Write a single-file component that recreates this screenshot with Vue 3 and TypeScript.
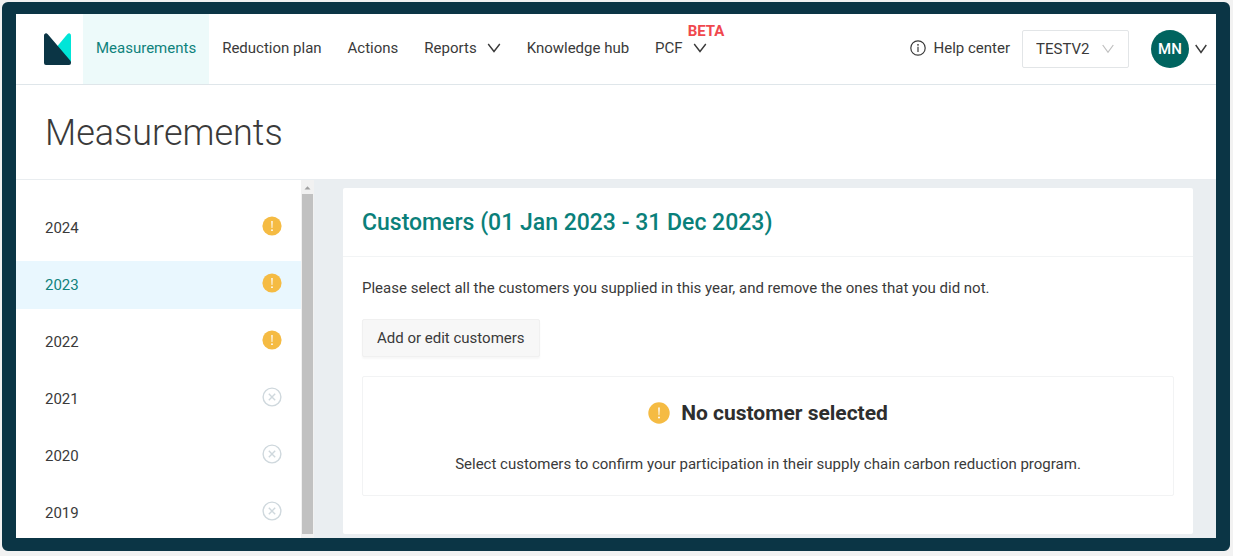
<script setup lang="ts">
import { ref } from 'vue'

interface NavItem {
  label: string
  menu?: boolean
  badge?: string
}

interface YearItem {
  year: number
  status: 'warning' | 'closed'
}

const navItems: NavItem[] = [
  { label: 'Measurements' },
  { label: 'Reduction plan' },
  { label: 'Actions' },
  { label: 'Reports', menu: true },
  { label: 'Knowledge hub' },
  { label: 'PCF', menu: true, badge: 'BETA' },
]

const years: YearItem[] = [
  { year: 2024, status: 'warning' },
  { year: 2023, status: 'warning' },
  { year: 2022, status: 'warning' },
  { year: 2021, status: 'closed' },
  { year: 2020, status: 'closed' },
  { year: 2019, status: 'closed' },
]

const activeNav = ref('Measurements')
const activeYear = ref(2023)
const workspace = ref('TESTV2')
</script>

<template>
  <div class="frame">
    <header class="topbar">
      <a href="#" class="logo" aria-label="Home">
        <svg width="27" height="32" viewBox="0 0 27 32" aria-hidden="true">
          <path d="M13.5 13 23.3 1.3Q24.5 0 25.8.4 27 1 27 2.4V29.5L13 14z" fill="#00e5d8" />
          <path d="M0 2.5Q0 .9 1.2.5 2.6 0 3.8 1.2L26.2 27.4Q27 28.4 27 29.6V30Q27 32 25 32H2Q0 32 0 30z" fill="#0b3545" />
        </svg>
      </a>
      <nav class="nav" aria-label="Main">
        <template v-for="item in navItems" :key="item.label">
          <button v-if="item.menu" type="button" class="nav-item" aria-haspopup="menu">
            {{ item.label }}
            <span class="caret">
              <span v-if="item.badge" class="badge">{{ item.badge }}</span>
              <svg width="14" height="10" viewBox="0 0 14 10" aria-hidden="true">
                <path d="M1.2 1 7 8.5 12.8 1" fill="none" stroke="currentColor" stroke-width="1.4" />
              </svg>
            </span>
          </button>
          <a
            v-else
            href="#"
            class="nav-item"
            :class="{ active: item.label === activeNav }"
            @click.prevent="activeNav = item.label"
          >{{ item.label }}</a>
        </template>
      </nav>
      <div class="tools">
        <a href="#" class="help">
          <svg width="16" height="16" viewBox="0 0 16 16" aria-hidden="true">
            <circle cx="8" cy="8" r="7.2" fill="none" stroke="currentColor" stroke-width="1.2" />
            <circle cx="8" cy="4.8" r="0.9" fill="currentColor" />
            <path d="M8 6.8V12" stroke="currentColor" stroke-width="1.2" />
          </svg>
          Help center
        </a>
        <div class="picker">
          <select v-model="workspace" aria-label="Workspace">
            <option>TESTV2</option>
          </select>
          <svg width="12" height="10" viewBox="0 0 12 10" aria-hidden="true">
            <path d="M.7 1 6 8.3 11.3 1" fill="none" stroke="currentColor" stroke-width="1.2" />
          </svg>
        </div>
        <button type="button" class="account" aria-label="Account menu">
          <span class="avatar">MN</span>
          <svg width="12" height="10" viewBox="0 0 12 10" aria-hidden="true">
            <path d="M.7 1 6 8.5 11.3 1" fill="none" stroke="currentColor" stroke-width="1.4" />
          </svg>
        </button>
      </div>
    </header>

    <div class="title-bar">
      <h1>Measurements</h1>
    </div>

    <div class="body">
      <aside class="sidebar">
        <ul class="years">
          <li v-for="item in years" :key="item.year">
            <button
              type="button"
              class="year"
              :class="{ active: item.year === activeYear }"
              @click="activeYear = item.year"
            >
              {{ item.year }}
              <svg width="20" height="20" viewBox="0 0 20 20" aria-hidden="true">
                <template v-if="item.status === 'warning'">
                  <circle cx="10" cy="10" r="9.6" fill="#f5bb43" />
                  <path d="M9.3 5h1.4l-.3 7h-.8z" fill="#fff" />
                  <circle cx="10" cy="14.2" r="0.9" fill="#fff" />
                </template>
                <template v-else>
                  <circle cx="10" cy="10" r="8.9" fill="none" stroke="#cfd8dd" stroke-width="1.4" />
                  <path d="M6.8 6.8l6.4 6.4M13.2 6.8l-6.4 6.4" stroke="#cfd8dd" stroke-width="1.4" />
                </template>
              </svg>
            </button>
          </li>
        </ul>
        <div class="scrollbar" aria-hidden="true">
          <svg width="13" height="14" viewBox="0 0 13 14">
            <path d="M3.5 9.5 6.5 6.2 9.5 9.5z" fill="#a0a0a0" />
          </svg>
          <div class="thumb"></div>
        </div>
      </aside>

      <main class="content">
        <section class="card">
          <h2>Customers (01 Jan 2023 - 31 Dec 2023)</h2>
          <div class="card-body">
            <p>Please select all the customers you supplied in this year, and remove the ones that you did not.</p>
            <button type="button" class="edit">Add or edit customers</button>
            <div class="empty">
              <h3>
                <svg width="22" height="22" viewBox="0 0 22 22" aria-hidden="true">
                  <circle cx="11" cy="11" r="10.7" fill="#f5bb43" />
                  <path d="M10.2 5.6h1.6l-.4 7.6h-.8z" fill="#fff" />
                  <circle cx="11" cy="15.6" r="1" fill="#fff" />
                </svg>
                No customer selected
              </h3>
              <p>Select customers to confirm your participation in their supply chain carbon reduction program.</p>
            </div>
          </div>
        </section>
      </main>
    </div>
  </div>
</template>

<style>
body {
  margin: 0;
  background: #f2f2f2;
}
</style>

<style scoped>
.frame {
  box-sizing: border-box;
  min-height: calc(100vh - 7px);
  margin: 2px 3px 5px 2px;
  border: solid #0b3545;
  border-width: 12px 14px 13px;
  border-radius: 6px;
  background: #fff;
  color: #3a3a3a;
  font: 15px/24px Roboto, "Liberation Sans", sans-serif;
  display: flex;
  flex-direction: column;
}

button,
select {
  font: inherit;
  color: inherit;
  background: none;
  border: 0;
  margin: 0;
  padding: 0;
  cursor: pointer;
}

a {
  color: inherit;
  text-decoration: none;
}

svg {
  display: block;
  flex: none;
}

h1,
h2,
h3,
p,
ul {
  margin: 0;
  padding: 0;
}

.topbar {
  display: flex;
  height: 70px;
  border-bottom: 1px solid #dfe6ea;
}

.logo {
  display: flex;
  align-items: center;
  padding: 0 12px 0 28px;
}

.nav {
  display: flex;
}

.nav-item {
  display: flex;
  align-items: center;
  gap: 10px;
  padding: 0 13px 2px;
  white-space: nowrap;
}

.nav-item.active {
  background: #edfafa;
  color: #0f827c;
}

.caret {
  position: relative;
}

.badge {
  position: absolute;
  left: -5px;
  bottom: 14px;
  line-height: 16px;
  font-weight: 700;
  color: #f0484e;
}

.tools {
  display: flex;
  align-items: center;
  margin-left: auto;
  padding-right: 9px;
}

.help {
  display: flex;
  align-items: center;
  gap: 8px;
  margin-right: 12px;
  padding-bottom: 2px;
  white-space: nowrap;
}

.picker {
  display: grid;
  align-items: center;
  margin-right: 22px;
  border: 1px solid #e2e5e7;
  border-radius: 2px;
}

.picker select {
  grid-area: 1 / 1;
  appearance: none;
  width: 105px;
  height: 36px;
  padding-left: 13px;
}

.picker svg {
  grid-area: 1 / 1;
  justify-self: end;
  margin-right: 14px;
  color: #bfbfbf;
  pointer-events: none;
}

.account {
  display: flex;
  align-items: center;
  gap: 6px;
}

.avatar {
  width: 38px;
  height: 38px;
  border-radius: 50%;
  background: #00645f;
  color: #fff;
  font-weight: 500;
  line-height: 38px;
  text-align: center;
}

.title-bar {
  padding: 24px 29px 22px;
  border-bottom: 1px solid #e9edf0;
}

h1 {
  font-size: 36px;
  line-height: 48px;
  font-weight: 300;
}

.body {
  display: flex;
  flex: 1;
  background: #eaeef1;
}

.sidebar {
  display: flex;
  width: 298px;
  flex: none;
  background: #fff;
}

.years {
  flex: 1;
  display: flex;
  flex-direction: column;
  gap: 9px;
  padding-top: 24px;
  list-style: none;
}

.year {
  display: flex;
  align-items: flex-start;
  justify-content: space-between;
  width: 100%;
  padding: 12px 19px 12px 29px;
}

.year.active {
  background: #e9f7fe;
  color: #0f827c;
}

.scrollbar {
  display: flex;
  flex-direction: column;
  width: 13px;
  padding-bottom: 4px;
  background: #f1f1f1;
}

.thumb {
  flex: 1;
  margin: 0 1px;
  background: #c1c1c1;
}

.content {
  flex: 1;
  display: flex;
  padding: 8px 23px 4px 29px;
}

.card {
  flex: 1;
  border-radius: 2px;
  background: #fff;
}

h2 {
  padding: 19px 19px 17px;
  border-bottom: 1px solid #f2f4f5;
  font-size: 23px;
  line-height: 32px;
  font-weight: 500;
  color: #0a807a;
}

.card-body {
  padding: 19px 19px 38px;
}

.edit {
  display: block;
  margin: 19px 0;
  padding: 6px 14px;
  border: 1px solid #f0f0f0;
  border-radius: 2px;
  background: #f7f7f7;
  box-shadow: 0 2px 2px #f7f7f7;
}

.empty {
  padding: 20px 20px 19px;
  border: 1px solid #f2f3f4;
  border-radius: 2px;
  text-align: center;
}

h3 {
  display: flex;
  align-items: center;
  justify-content: center;
  gap: 11px;
  margin-bottom: 23px;
  font-size: 21px;
  line-height: 32px;
  font-weight: 700;
  color: #2e2e2e;
}
</style>
